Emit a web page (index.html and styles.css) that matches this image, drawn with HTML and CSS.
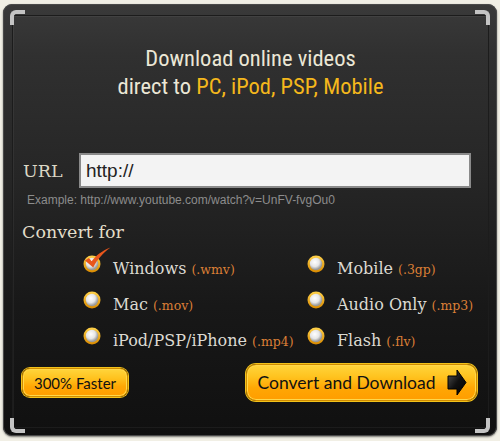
FILE: index.html
```html
<!DOCTYPE html>
<html>
<head>
<meta charset="utf-8">
<link rel="stylesheet" href="styles.css">
</head>
<body>
<div class="panel">
  <span class="corner tl"></span>
  <span class="corner tr"></span>
  <span class="corner bl"></span>
  <span class="corner br"></span>
  <div class="inner">
    <h1 class="title">Download online videos<br>direct to <span class="hl">PC, iPod, PSP, Mobile</span></h1>
    <div class="url-row">
      <label class="url-label">URL</label>
      <div class="url-input">http://</div>
    </div>
    <p class="example">Example: http://www.youtube.com/watch?v=UnFV-fvgOu0</p>
    <h2 class="convert">Convert for</h2>
    <div class="options">
      <div class="opt">
        <span class="radio checked">
          <svg width="18" height="18" viewBox="0 0 18 18" class="ball"><defs><radialGradient id="w1" cx="0.4" cy="0.35" r="0.6"><stop offset="0" stop-color="#ffffff"/><stop offset="0.6" stop-color="#e6e6e6"/><stop offset="1" stop-color="#9a9a9a"/></radialGradient><linearGradient id="o1" x1="0" y1="0" x2="0" y2="1"><stop offset="0" stop-color="#ffd24a"/><stop offset="1" stop-color="#d98a00"/></linearGradient></defs><circle cx="9" cy="9" r="8.5" fill="url(#o1)"/><circle cx="9" cy="9" r="6.2" fill="url(#w1)"/></svg>
          <svg class="check" width="28" height="24" viewBox="0 0 28 24"><path d="M2 13.5 L6 11 L8.6 14.3 C13 8.5 18.5 4 27.5 0.5 C20 6 14.5 12 10.2 20.5 Z" fill="#e8561c"/></svg>
        </span>
        <span class="name">Windows <span class="ext">(.wmv)</span></span>
      </div>
      <div class="opt">
        <span class="radio"><svg width="18" height="18" viewBox="0 0 18 18"><circle cx="9" cy="9" r="8.5" fill="url(#o1)"/><circle cx="9" cy="9" r="6.2" fill="url(#w1)"/></svg></span>
        <span class="name">Mac <span class="ext">(.mov)</span></span>
      </div>
      <div class="opt">
        <span class="radio"><svg width="18" height="18" viewBox="0 0 18 18"><circle cx="9" cy="9" r="8.5" fill="url(#o1)"/><circle cx="9" cy="9" r="6.2" fill="url(#w1)"/></svg></span>
        <span class="name">iPod/PSP/iPhone <span class="ext">(.mp4)</span></span>
      </div>
      <div class="opt">
        <span class="radio"><svg width="18" height="18" viewBox="0 0 18 18"><circle cx="9" cy="9" r="8.5" fill="url(#o1)"/><circle cx="9" cy="9" r="6.2" fill="url(#w1)"/></svg></span>
        <span class="name">Mobile <span class="ext">(.3gp)</span></span>
      </div>
      <div class="opt">
        <span class="radio"><svg width="18" height="18" viewBox="0 0 18 18"><circle cx="9" cy="9" r="8.5" fill="url(#o1)"/><circle cx="9" cy="9" r="6.2" fill="url(#w1)"/></svg></span>
        <span class="name">Audio Only <span class="ext">(.mp3)</span></span>
      </div>
      <div class="opt">
        <span class="radio"><svg width="18" height="18" viewBox="0 0 18 18"><circle cx="9" cy="9" r="8.5" fill="url(#o1)"/><circle cx="9" cy="9" r="6.2" fill="url(#w1)"/></svg></span>
        <span class="name">Flash <span class="ext">(.flv)</span></span>
      </div>
    </div>
    <div class="actions">
      <button class="btn faster">300% Faster</button>
      <button class="btn go">Convert and Download
        <svg width="20" height="27" viewBox="0 0 20 27"><defs><linearGradient id="ar" x1="0" y1="0" x2="1" y2="1"><stop offset="0" stop-color="#555"/><stop offset="0.5" stop-color="#111"/><stop offset="1" stop-color="#000"/></linearGradient></defs><path d="M1 7 H10 V1 L19 13.5 L10 26 V20 H1 Z" fill="url(#ar)" stroke="#000" stroke-width="1"/></svg>
      </button>
    </div>
  </div>
</div>
</body>
</html>
```

FILE: styles.css
```css
* { box-sizing: border-box; }
html, body { margin: 0; padding: 0; }
body {
  background: #f1efe5;
  width: 500px;
  height: 441px;
  overflow: hidden;
}
.panel {
  position: relative;
  margin: 4px 0 0 3px;
  width: 494px;
  height: 432px;
  padding: 11px 8px 8px 9px;
  border-radius: 9px;
  background: linear-gradient(180deg, #3a3a3a 0, #303030 12%, #262626 40%, #181818 70%, #101010 100%);
  box-shadow: inset 0 0 0 1px #4a4a4a, 0 1px 2px rgba(0,0,0,0.5);
}
.corner {
  position: absolute;
  width: 15px;
  height: 15px;
  border: 0 solid #c4c4c4;
}
.corner.tl { left: 7px; top: 6px; border-top-width: 4px; border-left-width: 4px; border-top-left-radius: 6px; }
.corner.tr { right: 7px; top: 6px; border-top-width: 4px; border-right-width: 4px; border-top-right-radius: 6px; }
.corner.bl { left: 7px; bottom: 3px; border-bottom-width: 4px; border-left-width: 4px; border-bottom-left-radius: 6px; }
.corner.br { right: 7px; bottom: 3px; border-bottom-width: 4px; border-right-width: 4px; border-bottom-right-radius: 6px; }
.inner {
  height: 100%;
  border: 1px solid #1c1c1c;
  box-shadow: inset 1px 1px 0 rgba(255,255,255,0.05);
  display: flex;
  flex-direction: column;
}
.title {
  margin: 28px 0 0;
  text-align: center;
  font-family: "Roboto Condensed", Roboto, sans-serif;
  font-weight: normal;
  font-size: 22.5px;
  line-height: 28px;
  color: #ebe7d6;
}
.hl { color: #f5b81c; }
.url-row {
  margin-top: 53px;
  padding-left: 10px;
  display: flex;
  align-items: center;
}
.url-label {
  width: 56px;
  font-family: "DejaVu Serif", serif;
  font-size: 17.5px;
  color: #dcd8c6;
}
.url-input {
  width: 392px;
  height: 35px;
  border: 2px solid #8a8a8a;
  background: #f3f3f3;
  padding-left: 5px;
  font-family: "Liberation Sans", Arial, sans-serif;
  font-size: 19px;
  line-height: 31px;
  color: #222;
}
.example {
  margin: 5px 0 0;
  padding-left: 14px;
  font-family: "Liberation Sans", Arial, sans-serif;
  font-size: 12px;
  line-height: 14px;
  color: #8c8c8c;
}
.convert {
  margin: 13px 0 0;
  padding-left: 9px;
  font-family: "DejaVu Serif", serif;
  font-weight: normal;
  font-size: 17.5px;
  line-height: 24px;
  color: #e2ddc9;
}
.options {
  margin-top: 6px;
  padding-left: 70px;
  display: grid;
  grid-template-columns: 224px 200px;
  grid-template-rows: repeat(3, 36px);
  grid-auto-flow: column;
}
.opt {
  display: flex;
  align-items: center;
  gap: 12px;
}
.radio {
  position: relative;
  width: 18px;
  height: 18px;
  margin-bottom: 8px;
  flex: none;
}
.radio svg { display: block; }
.radio .check {
  position: absolute;
  left: 0;
  top: -8px;
}
.name {
  font-family: "DejaVu Serif", serif;
  font-size: 16px;
  color: #dcdad2;
  white-space: nowrap;
}
.ext {
  font-size: 12.5px;
  color: #db7f36;
}
.actions {
  margin-top: 6px;
  padding: 0 11px 0 9px;
  display: flex;
  align-items: center;
  justify-content: space-between;
  height: 37px;
}
.btn {
  border: 1px solid #d08c00;
  background: linear-gradient(180deg, #ffd53c 0%, #ffc21e 35%, #ffa704 65%, #ff9d00 100%);
  box-shadow: inset 0 0 0 1px #ffd84a, 0 0 0 1px #f2c21a;
  font-family: Lato, "Open Sans", sans-serif;
  color: #111;
  padding: 0;
  display: flex;
  align-items: center;
  justify-content: center;
}
.faster {
  width: 106px;
  height: 29px;
  border-radius: 8px;
  font-size: 15px;
}
.go {
  width: 231px;
  height: 37px;
  border-radius: 10px;
  font-size: 17.5px;
  gap: 12px;
  padding-left: 2px;
}
.go svg { display: block; }
```
